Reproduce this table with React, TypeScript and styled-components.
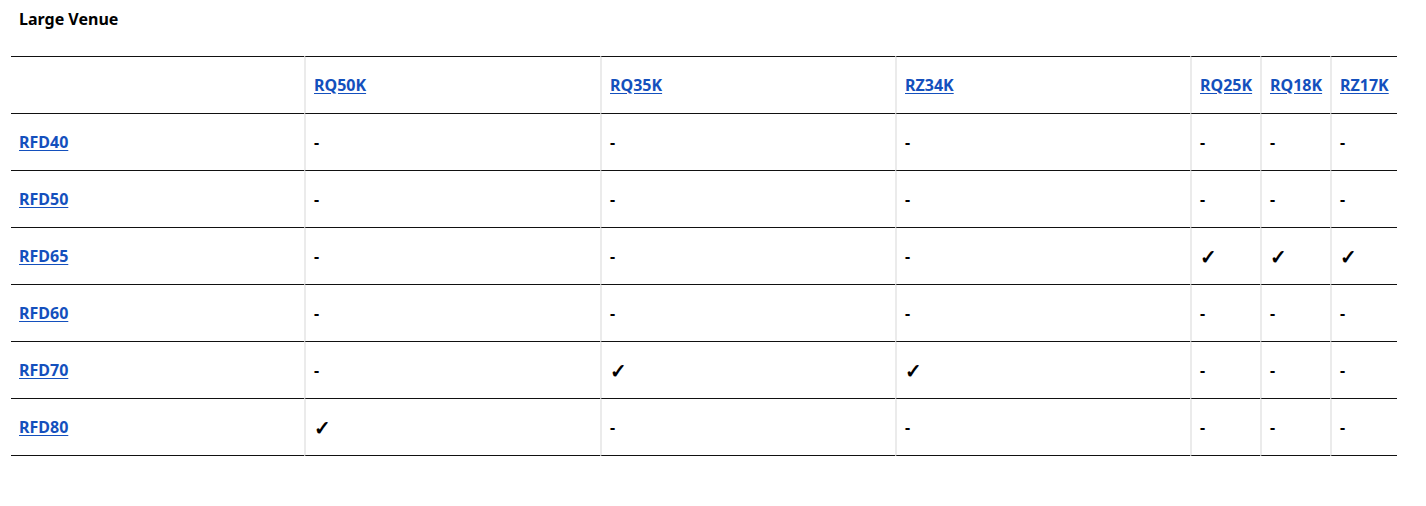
import styled, { createGlobalStyle } from "styled-components";

const GlobalStyle = createGlobalStyle`
  body {
    margin: 0;
    background: #fff;
    font-family: "Noto Sans", "Open Sans", sans-serif;
    color: #000;
  }
`;

const Page = styled.div`
  padding: 9px 29px 40px 11px;
`;

const Title = styled.h3`
  margin: 0 0 27px 8px;
  font-size: 16px;
  line-height: 20px;
  font-weight: 700;
`;

const Table = styled.table`
  width: 1386px;
  table-layout: fixed;
  border-collapse: separate;
  border-spacing: 0;
  font-size: 16px;
  font-weight: 700;
`;

const Cell = styled.td<{ first?: boolean; last?: boolean }>`
  height: 56px;
  padding: 0 8px;
  vertical-align: middle;
  text-align: left;
  border-top: 1px solid #111;
  border-bottom: ${({ last }) => (last ? "1px solid #111" : "none")};
  border-left: ${({ first }) => (first ? "none" : "2px solid #ebebeb")};
  white-space: nowrap;
`;

const HeadCell = styled(Cell).attrs({ as: "th" })``;

const ModelLink = styled.a`
  color: #1450bd;
  text-decoration: underline;
  text-underline-offset: 2px;
`;

const Check = styled.span`
  font-size: 20px;
  line-height: 1;
  font-weight: 700;
  vertical-align: -2px;
`;

const widths = [293, 296, 295, 295, 70, 70, 67];
const speakers = ["RQ50K", "RQ35K", "RZ34K", "RQ25K", "RQ18K", "RZ17K"];

const rows: { name: string; fits: string[] }[] = [
  { name: "RFD40", fits: [] },
  { name: "RFD50", fits: [] },
  { name: "RFD65", fits: ["RQ25K", "RQ18K", "RZ17K"] },
  { name: "RFD60", fits: [] },
  { name: "RFD70", fits: ["RQ35K", "RZ34K"] },
  { name: "RFD80", fits: ["RQ50K"] },
];

export default function App() {
  return (
    <Page>
      <GlobalStyle />
      <Title>Large Venue</Title>
      <Table>
        <colgroup>
          {widths.map((w, i) => (
            <col key={i} style={{ width: w }} />
          ))}
        </colgroup>
        <thead>
          <tr>
            <HeadCell first />
            {speakers.map((s) => (
              <HeadCell key={s}>
                <ModelLink href="#">{s}</ModelLink>
              </HeadCell>
            ))}
          </tr>
        </thead>
        <tbody>
          {rows.map((r, ri) => {
            const last = ri === rows.length - 1;
            return (
              <tr key={r.name}>
                <Cell first last={last}>
                  <ModelLink href="#">{r.name}</ModelLink>
                </Cell>
                {speakers.map((s) => (
                  <Cell key={s} last={last}>
                    {r.fits.includes(s) ? <Check>✓</Check> : "-"}
                  </Cell>
                ))}
              </tr>
            );
          })}
        </tbody>
      </Table>
    </Page>
  );
}
